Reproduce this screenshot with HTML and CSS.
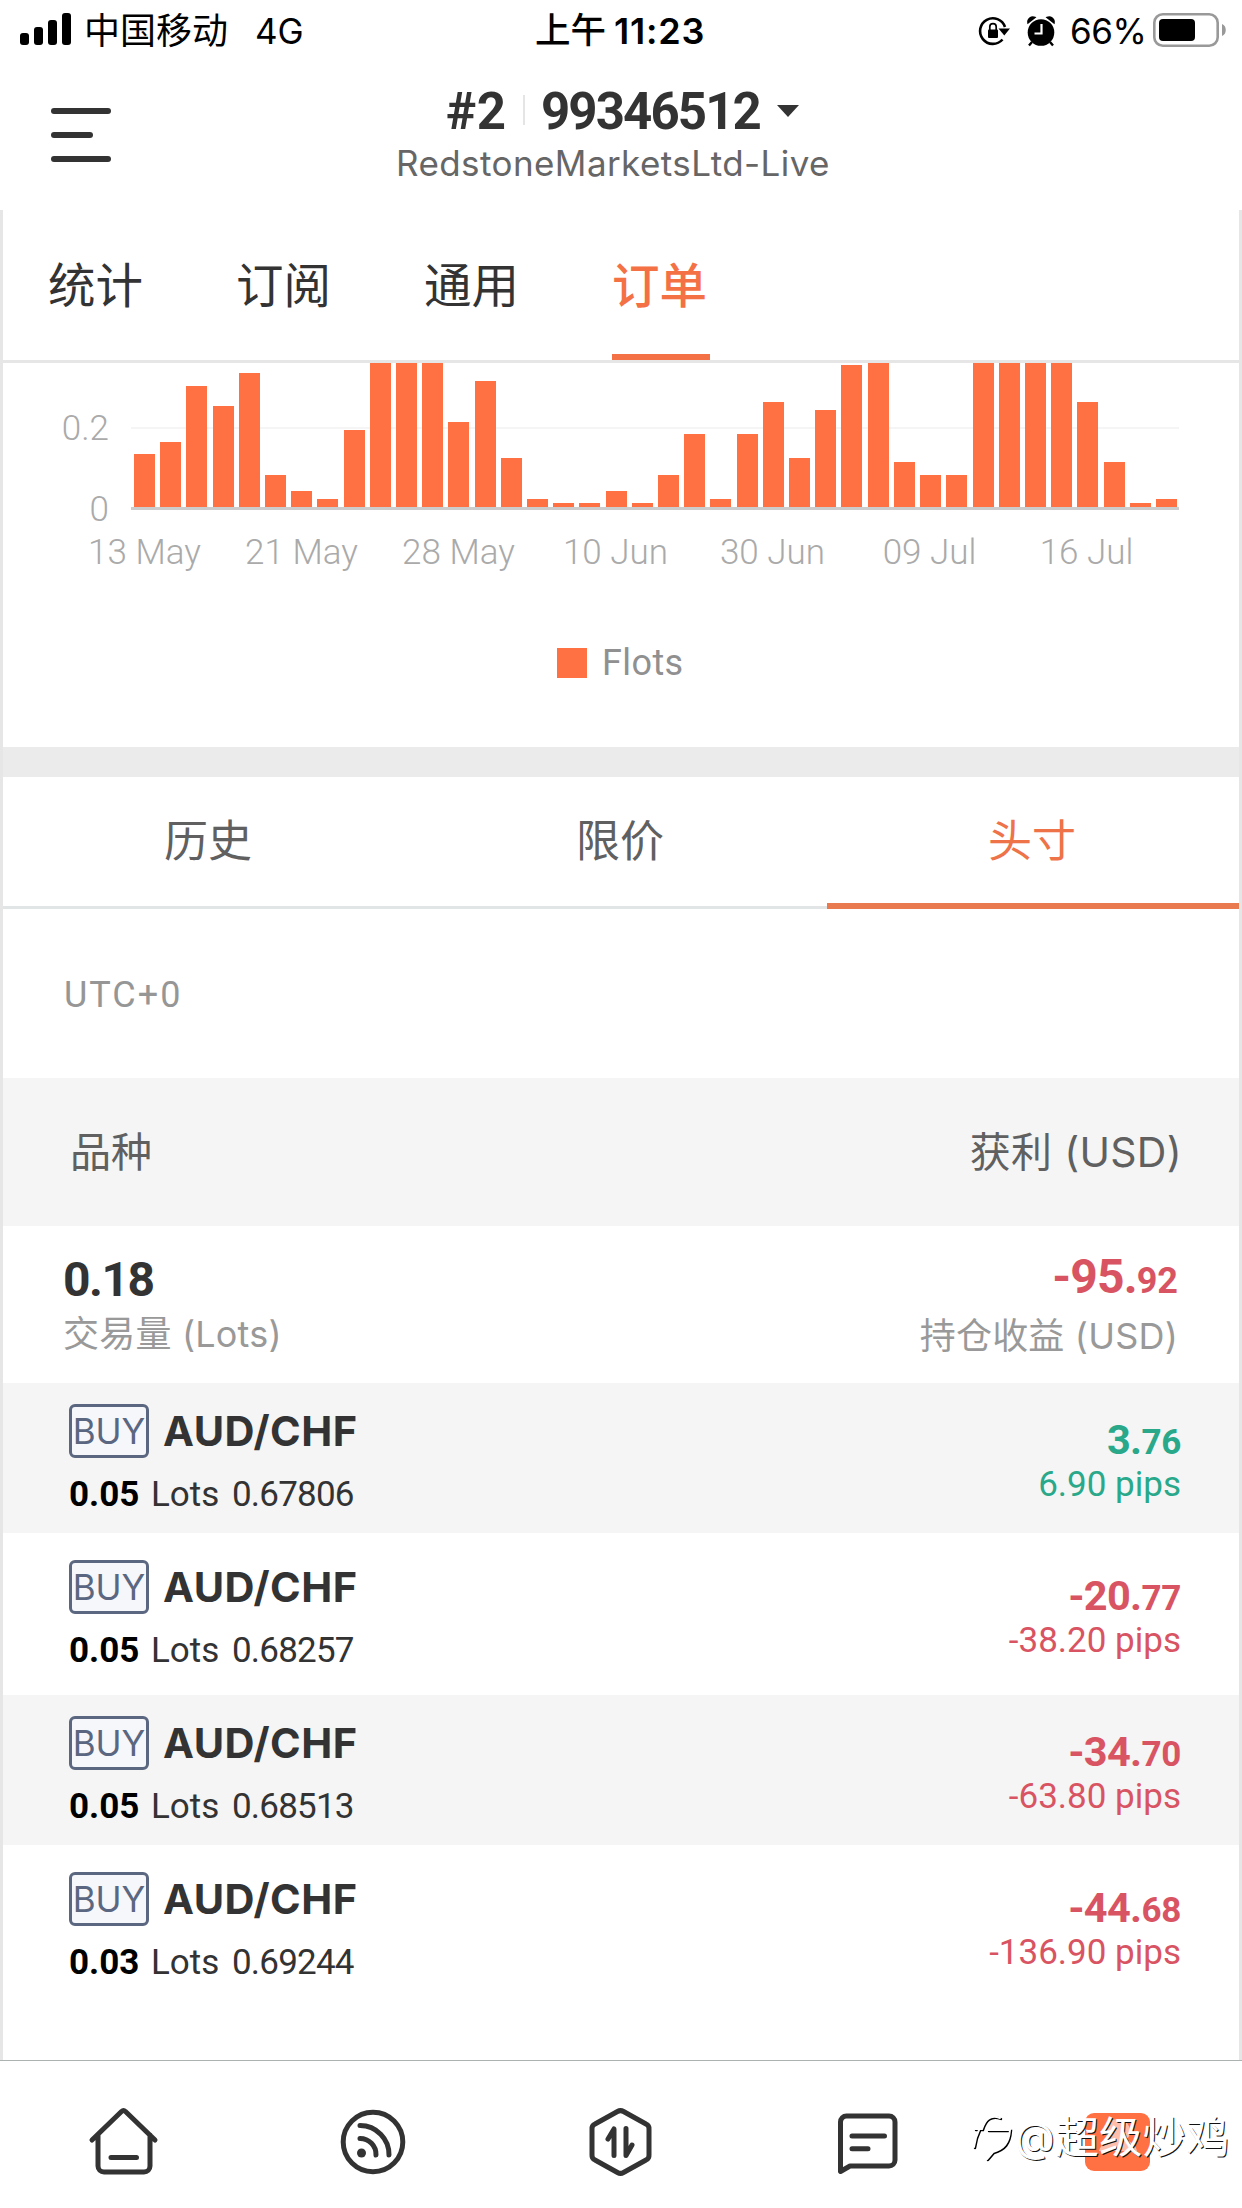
FILE: index.html
```html
<!DOCTYPE html>
<html lang="zh-CN">
<head>
<meta charset="utf-8">
<title>订单</title>
<link rel="stylesheet" href="styles.css">
</head>
<body>
<div class="status">
  <svg class="signal" width="52" height="34" viewBox="0 0 52 34"><rect x="0" y="20" width="9" height="12" rx="3"/><rect x="14" y="14" width="9" height="18" rx="3"/><rect x="28" y="7" width="9" height="25" rx="3"/><rect x="42" y="0" width="9" height="32" rx="3"/></svg>
  <span class="carrier">中国移动</span>
  <span class="net">4G</span>
  <span class="ampm">上午</span>
  <span class="clock">11:23</span>
  <svg class="lock" width="34" height="34" viewBox="0 0 34 34"><path d="M25.500 25.500A12.800 12.800 0 1 1 28 13" fill="none" stroke="#000" stroke-width="2.600"/><path d="M21.500 14.500h11.500l-5.700 7z"/><rect x="11" y="15.500" width="10" height="8.500" rx="1"/><path d="M12.800 16v-3.200a3.200 3.200 0 0 1 6.400 0V16" fill="none" stroke="#000" stroke-width="1.700"/></svg>
  <svg class="alarm" width="30" height="32" viewBox="0 0 30 32"><circle cx="15" cy="17.500" r="13.300"/><path d="M2 8a5 5 0 0 1 7-5.500zM28 8a5 5 0 0 0-7-5.500z" stroke="#000" stroke-width="1.500"/><path d="M6 27l-3 3.500M24 27l3 3.500" stroke="#000" stroke-width="2.400"/><path d="M15.500 9v9.500H8.500" fill="none" stroke="#fff" stroke-width="2.200"/></svg>
  <span class="pct">66%</span>
  <svg class="battery" width="74" height="34" viewBox="0 0 74 34"><rect x="1.300" y="1.300" width="63.400" height="31.400" rx="8.500" fill="none" stroke="#999" stroke-width="2.600"/><rect x="6" y="6" width="36" height="22" rx="4"/><path d="M69 11c5 1.500 5 10.500 0 12z" fill="#999"/></svg>
</div>

<header class="header">
  <div class="menu"><i></i><i class="short"></i><i></i></div>
  <div class="account">
    <div class="title"><span class="rank">#2</span><i class="sep"></i><span class="num">99346512</span><svg width="22" height="12" viewBox="0 0 22 12"><path d="M0 0h22L11 12z" fill="#333"/></svg></div>
    <div class="server">RedstoneMarketsLtd-Live</div>
  </div>
</header>

<main class="panel">
  <nav class="tabs"><a>统计</a><a>订阅</a><a>通用</a><a class="on">订单</a></nav>
  <section class="chart">
    <div class="plot">
      <div class="yaxis"><span>0.2</span><span>0</span></div>
      <div class="bars" id="bars"></div>
    </div>
    <div class="xaxis"><span>13 May</span><span>21 May</span><span>28 May</span><span>10 Jun</span><span>30 Jun</span><span>09 Jul</span><span>16 Jul</span></div>
    <div class="legend"><i></i><span>Flots</span></div>
  </section>
  <nav class="subtabs"><a>历史</a><a>限价</a><a class="on">头寸</a></nav>
  <div class="utc">UTC+0</div>
  <div class="thead"><span>品种</span><span>获利 (USD)</span></div>
  <div class="summary">
    <div><div class="vol">0.18</div><div class="label">交易量 (Lots)</div></div>
    <div class="right"><div class="total">-95.<small>92</small></div><div class="label pl">持仓收益 (USD)</div></div>
  </div>
  <div class="row grey">
    <div><div class="sym"><b class="buy">BUY</b><strong>AUD/CHF</strong></div><div class="lots"><b>0.05</b><span class="unit">Lots</span><span class="price">0.67806</span></div></div>
    <div class="right up"><div class="gain">3.<small>76</small></div><div class="pips">6.90 pips</div></div>
  </div>
  <div class="row">
    <div><div class="sym"><b class="buy">BUY</b><strong>AUD/CHF</strong></div><div class="lots"><b>0.05</b><span class="unit">Lots</span><span class="price">0.68257</span></div></div>
    <div class="right"><div class="gain">-20.<small>77</small></div><div class="pips">-38.20 pips</div></div>
  </div>
  <div class="row grey">
    <div><div class="sym"><b class="buy">BUY</b><strong>AUD/CHF</strong></div><div class="lots"><b>0.05</b><span class="unit">Lots</span><span class="price">0.68513</span></div></div>
    <div class="right"><div class="gain">-34.<small>70</small></div><div class="pips">-63.80 pips</div></div>
  </div>
  <div class="row">
    <div><div class="sym"><b class="buy">BUY</b><strong>AUD/CHF</strong></div><div class="lots"><b>0.03</b><span class="unit">Lots</span><span class="price">0.69244</span></div></div>
    <div class="right"><div class="gain">-44.<small>68</small></div><div class="pips">-136.90 pips</div></div>
  </div>
</main>

<footer class="tabbar">
  <a><svg width="72" height="72" viewBox="0 0 72 72"><path d="M4 34L33.500 5.500a3 3 0 0 1 4 0L67 34M10 29v31a6 6 0 0 0 6 6h40a6 6 0 0 0 6-6V29M23 51.500h25.500"/></svg></a>
  <a><svg width="72" height="72" viewBox="0 0 72 72"><circle cx="36" cy="36" r="29.800"/><path d="M23 19.500A29 29 0 0 1 52 49M23 32.500A16 16 0 0 1 39 49"/><circle cx="24.500" cy="47" r="4.500" class="solid"/></svg></a>
  <a><svg width="72" height="72" viewBox="0 0 72 72"><path d="M32.500 5.500a6 6 0 0 1 6 0L61 18a5 5 0 0 1 3 5v26a5 5 0 0 1-3 5L38.500 66.500a6 6 0 0 1-6 0L10 54a5 5 0 0 1-3-5V23a5 5 0 0 1 3-5zM23 33l6-10V49.500M41 22.500V49.500l6-10.500"/></svg></a>
  <a><svg width="72" height="72" viewBox="0 0 72 72"><path d="M7.500 65.500V16a6 6 0 0 1 6-6h42.500a6 6 0 0 1 6 6v38a6 6 0 0 1-6 6H17zM19 30h32.500M19 42.800h16"/></svg></a>
  <a><svg width="72" height="72" viewBox="0 0 72 72"><rect x="3" y="7" width="65" height="58" rx="9" fill="#ff7043" stroke="none"/><path d="M36 13a12 12 0 0 1 8 21c8 3 10 7 11 11H17c1-4 4-8 11-11a12 12 0 0 1 8-21z" fill="#fff" fill-opacity=".55" stroke="none"/></svg></a>
</footer>
<div class="watermark">
  <svg width="42" height="50" viewBox="0 0 42 50"><g fill="none" stroke-linecap="round"><path d="M2 36c1-8 3-13 5-17M3 18h7c3-9 8-15 18-11M16 19h22c-1 13-6 19-17 22l-6 7" stroke="#000" stroke-width="2.400"/><path d="M1 35c1-8 3-13 5-17M2 17h7c3-9 8-15 18-11M15 18h22c-1 13-6 19-17 22l-6 7" stroke="#fff" stroke-width="2"/></g></svg>
  <span>@</span><span class="name">超级炒鸡</span>
</div>
<script src="chart.js"></script>
</body>
</html>
```
FILE: styles.css
```css
* { box-sizing: border-box; }
body {
  margin: 0;
  width: 1242px;
  height: 2208px;
  overflow: hidden;
  background: #fff;
  color: #333;
  font-family: Inter, "Noto Sans CJK SC", sans-serif;
  display: flex;
  flex-direction: column;
}
i { display: block; }
.status { height: 62px; display: flex; align-items: center; line-height: 64px; font-size: 36px; color: #000; padding: 0 15px 0 20px; white-space: nowrap; }
.signal { margin: 0 12px 2px 0; }
.carrier { width: 171px; font-size: 36px; }
.net { width: 280px; font-size: 35px; }
.ampm { width: 79px; font-size: 35.500px; font-weight: 500; }
.clock { font-weight: 600; font-size: 36px; width: 363px; letter-spacing: .8px; }
.alarm { margin: 0 14px 0 15px; }
.pct { width: 83px; font-size: 35px; letter-spacing: -.5px; }
.lock, .pct, .alarm, .battery { flex: none; }
.battery { margin-bottom: 2px; }

.header { height: 148px; display: flex; padding: 20px 0 0 51px; }
.menu { width: 345px; padding-top: 26px; display: flex; flex-direction: column; gap: 18px; }
.menu i { width: 60px; height: 6px; border-radius: 3px; background: #333; }
.menu .short { width: 42px; }
.title { height: 60px; display: flex; align-items: center; padding-left: 50px; font: 700 51px/62px Roboto, sans-serif; }
.rank { width: 77px; letter-spacing: .5px; }
.sep { width: 2px; height: 30px; background: #e5e5e5; margin: 0 16px 4px 0; }
.num { width: 236px; letter-spacing: -1.900px; }
.title svg { margin-bottom: 3px; }
.server { font-size: 35px; line-height: 42px; color: #666; letter-spacing: .42px; }

.panel { height: 1850px; border: solid #e6e6e6; border-width: 0 3px; }
.tabs { height: 153px; display: flex; gap: 90px; padding-left: 45px; border-bottom: 3px solid #e6e6e6; }
.tabs a { width: 98px; height: 150px; line-height: 151px; font-size: 47.500px; border-bottom: 6px solid transparent; white-space: nowrap; }
.tabs .on { color: #f47145; border-color: #f47145; font-weight: 500; }
.chart { height: 414px; border-bottom: 30px solid #ebebeb; }
.plot { height: 147px; display: flex; }
.yaxis { width: 128px; padding: 42px 22px 0 0; text-align: right; font: 300 35px/48px Roboto, sans-serif; color: #aaa; display: flex; flex-direction: column; gap: 33px; }
.bars { width: 1048px; height: 147px; padding: 0 1.600px 0 3px; display: flex; justify-content: space-between; align-items: flex-end; border-bottom: 3px solid #ccc; background: linear-gradient(#f5f5f5, #f5f5f5) 0 64px / 100% 2px no-repeat; overflow: hidden; }
.bars i { width: 21px; flex: none; background: #ff7043; max-height: 144px; }
.xaxis { display: flex; padding-left: 64px; margin-top: 19px; font: 300 35px/48px Roboto, sans-serif; color: #aaa; }
.xaxis span { width: 157px; flex: none; text-align: center; white-space: nowrap; position: relative; left: -1px; }
.legend { display: flex; align-items: center; gap: 15px; margin-top: 59px; padding-left: 554px; height: 54px; font: 400 36px/54px Roboto, sans-serif; color: #909090; letter-spacing: .4px; }
.legend i { width: 30px; height: 30px; background: #ff7043; }
.subtabs { height: 132px; display: flex; border-bottom: 3px solid #e2e5e5; }
.subtabs a { flex: 1; height: 132px; line-height: 128px; text-align: center; font-size: 44px; color: #606060; text-indent: -2px; }
.subtabs .on { color: #ee7348; border-bottom: 6px solid #e9794e; }
.utc { height: 169px; padding-left: 61px; font: 400 36px/172px Roboto, sans-serif; color: #969696; letter-spacing: 2px; }
.thead { height: 148px; background: #f5f5f5; display: flex; justify-content: space-between; padding: 0 57px 0 67px; font-size: 41px; line-height: 148px; color: #606060; }
.thead span + span { letter-spacing: .3px; }
.summary { height: 157px; padding: 26px 61px 0 60px; display: flex; justify-content: space-between; }
.right { text-align: right; color: #d95462; }
.vol { font: 700 48px/56px Roboto, sans-serif; letter-spacing: -1.500px; }
.total { font: 700 48px/50px Roboto, sans-serif; letter-spacing: -.9px; }
.total small { font-size: 36px; letter-spacing: 0; }
.label { color: #999; font-size: 36px; line-height: 52px; letter-spacing: .2px; }
.pl { line-height: 61px; }
.row { height: 156px; padding: 21px 58px 0 66px; display: flex; justify-content: space-between; }
.grey { background: #f5f5f5; height: 150px; margin-bottom: 6px; }
.sym { display: flex; height: 54px; align-items: center; gap: 14px; }
.buy { width: 80px; height: 54px; border: 3px solid #5b6780; border-radius: 6px; background: #f6f7fb; color: #5b6780; font: 400 35px/48px Inter, sans-serif; text-align: center; }
.sym strong { font-size: 41.500px; line-height: 54px; font-weight: 700; letter-spacing: .5px; }
.lots { display: flex; font: 400 35px/48px Roboto, sans-serif; margin-top: 13px; }
.lots b { width: 82px; color: #000; }
.unit { width: 81px; }
.price { letter-spacing: -.8px; }
.gain { font: 700 41.500px/50px Roboto, sans-serif; margin-top: 11px; letter-spacing: -.7px; }
.gain small { font-size: 35px; letter-spacing: -.3px; }
.pips { font: 400 35px/44px Roboto, sans-serif; margin-top: -5px; }
.up { color: #29a88a; }

.tabbar { height: 148px; border-top: 1.500px solid #adb2ae; display: flex; padding-top: 45px; }
.tabbar a { flex: 1; text-align: center; }
.tabbar svg { fill: none; stroke: #333; stroke-width: 5; stroke-linecap: round; stroke-linejoin: round; }
.tabbar .solid { fill: #333; stroke: none; }
.watermark { position: absolute; left: 973px; top: 2110px; height: 54px; display: flex; align-items: center; line-height: 54px; font-size: 41px; color: #fff; text-shadow: 1px 1px 0 #111; white-space: nowrap; }
.watermark .name { font-size: 43.500px; font-weight: 400; margin-left: 1px; }
```
FILE: chart.js
```javascript
// Lots per trade, in hundredths; one hundredth is 4.05px tall.
const lots = [13, 16, 30, 25, 33, 8, 4, 2, 19, 40, 40, 40, 21, 31, 12, 2, 1, 1, 4, 1,
  8, 18, 2, 18, 26, 12, 24, 35, 40, 11, 8, 8, 40, 40, 40, 40, 26, 11, 1, 2];
const bars = document.getElementById('bars');
for (const v of lots) {
  const bar = document.createElement('i');
  bar.style.height = v * 4.05 + 'px';
  bars.appendChild(bar);
}
```
